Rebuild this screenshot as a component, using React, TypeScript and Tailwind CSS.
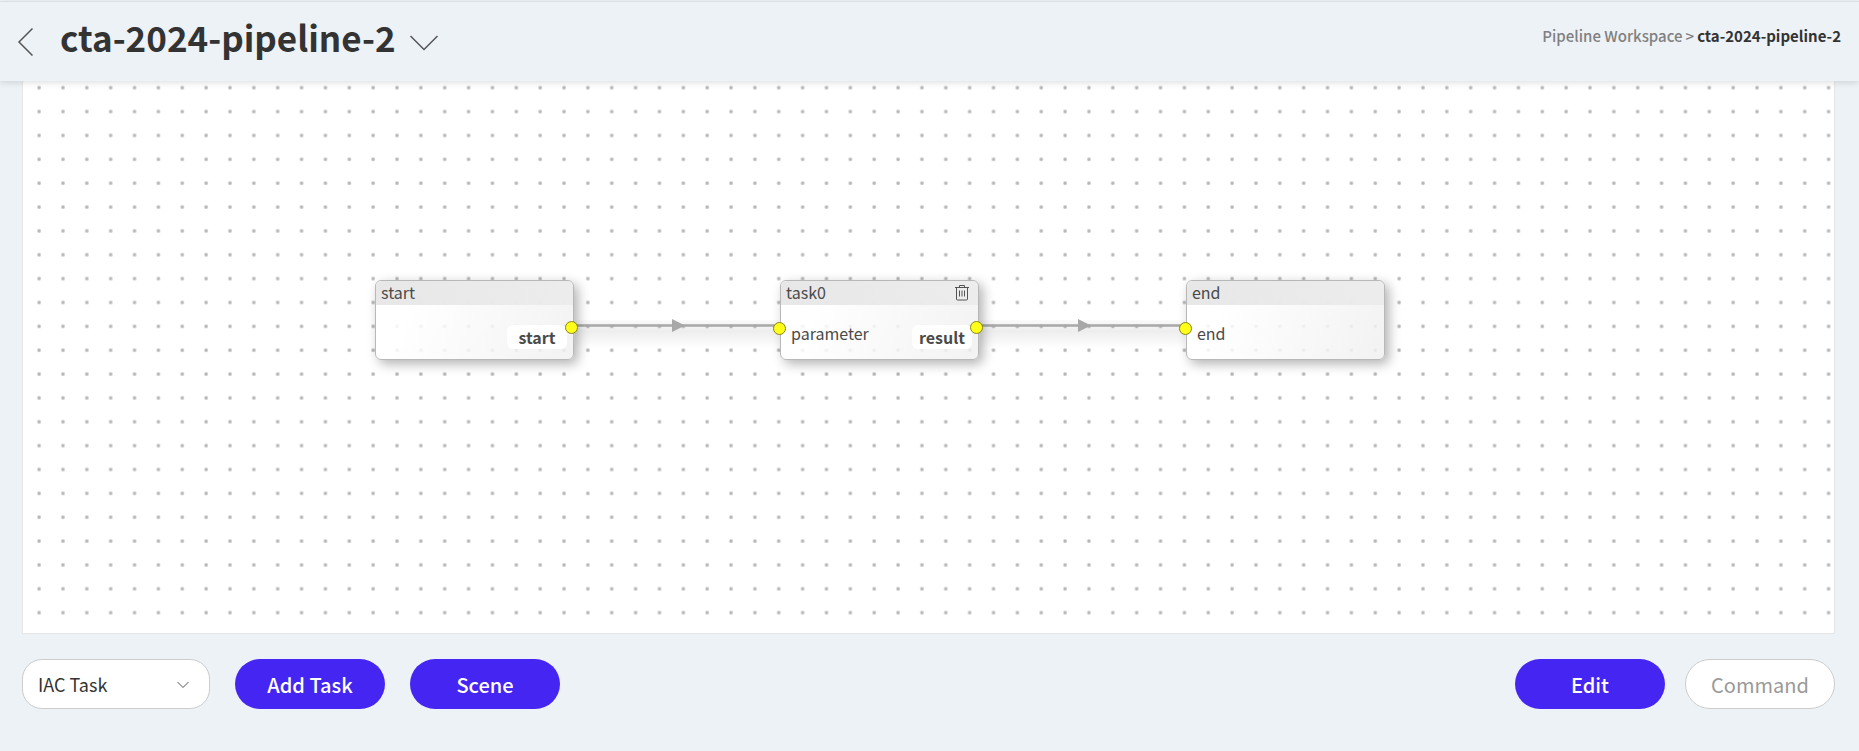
import type { ReactNode } from "react";

const DOT_STEP = 23.86;

function Port({ side, top }: { side: "left" | "right"; top: "high" | "low" }) {
  return (
    <span
      className={`absolute size-[13px] rounded-full border border-[#85850f] bg-[#ffff1a] ${
        side === "left" ? "-left-2" : "right-[-5px]"
      } ${top === "high" ? "top-10" : "top-[41px]"}`}
    />
  );
}

function Node({
  title,
  input,
  output,
  place,
  action,
}: {
  title: string;
  input?: string;
  output?: string;
  place: string;
  action?: ReactNode;
}) {
  return (
    <section
      className={`absolute top-[199px] flex h-20 w-[199px] flex-col rounded-md border border-[#b8b8b8] bg-linear-115 from-white/85 from-20% to-[#f0f0f0]/85 text-base text-[#4a4a4a] shadow-[4px_4px_12px_rgba(0,0,0,0.3)] ${place}`}
    >
      <header className="flex h-6 items-center justify-between rounded-t-md bg-linear-to-r from-[#e3e3e3]/85 to-[#ebebeb]/85 pr-2 pl-[5px]">
        <h2 className="self-start leading-[22px]">{title}</h2>
        {action}
      </header>
      <div className="flex grow justify-between">
        {input ? <span className="pt-4 pl-[10px] leading-6">{input}</span> : <span />}
        {output && (
          <span className="mt-5 mr-1.5 h-6 w-[60px] rounded-md bg-white text-center leading-6 font-bold">{output}</span>
        )}
      </div>
      {input && <Port side="left" top="low" />}
      {output && <Port side="right" top="high" />}
    </section>
  );
}

function TrashIcon() {
  return (
    <svg className="h-[18px] w-4" viewBox="0 0 16 18" fill="none" stroke="#555" strokeWidth="1">
      <path d="M1 3.5h14M5.5 3.5v-2h5v2M2.5 3.5v11.5a1 1 0 0 0 1 1h9a1 1 0 0 0 1-1V3.5M5.5 6.5v6M8 6.5v6M10.5 6.5v6" />
    </svg>
  );
}

export default function App() {
  return (
    <div className="flex min-h-screen flex-col bg-[#edf2f7] font-['Noto_Sans_CJK_KR','Noto_Sans_CJK_SC',sans-serif] text-[#333]">
      <div className="h-px" />
      <header className="relative z-10 flex h-20 items-start justify-between border-t border-[#d9dfe4] bg-[#edf2f7] pr-[18px] pl-[17px] shadow-[0_2px_6px_rgba(0,0,0,0.12)]">
        <div className="flex items-center pt-[7px]">
          <button aria-label="Back" className="mt-2.5">
            <svg className="h-7 w-4" viewBox="0 0 16 28" fill="none" stroke="#555" strokeWidth="1.5">
              <path d="M15.5 .5 2 14l13.500 13.500" />
            </svg>
          </button>
          <h1 className="ml-[27px] text-[35px] leading-[56px] font-bold">cta-2024-pipeline-2</h1>
          <button aria-label="Choose pipeline" className="mt-3 ml-3.5">
            <svg className="h-4 w-7" viewBox="0 0 28 16" fill="none" stroke="#555" strokeWidth="1.5">
              <path d="M.5 1 14 14.500 27.500 1" />
            </svg>
          </button>
        </div>
        <nav className="flex gap-[3px] pt-[22px] text-[15px] leading-6 font-medium">
          <a href="#workspace" className="text-[#808080]">Pipeline Workspace</a>
          <span className="text-[#808080]">&gt;</span>
          <span className="font-bold">cta-2024-pipeline-2</span>
        </nav>
      </header>

      <main className="relative mr-6 ml-[22px] h-[553px] overflow-hidden border border-t-0 border-[#e6e6e6] bg-white">
        <svg className="absolute inset-0 size-full">
          <defs>
            <pattern id="dots" x="4.100" y="-5.300" width={DOT_STEP} height={DOT_STEP} patternUnits="userSpaceOnUse">
              <rect x="10.400" y="10.400" width="3.200" height="3.200" rx="0.600" fill="#b6b6b6" />
            </pattern>
            <linearGradient id="wire-shade" x1="0" y1="0" x2="0" y2="1">
              <stop offset="0" stopColor="#000" stopOpacity="0.02" />
              <stop offset="0.4" stopColor="#000" stopOpacity="0.07" />
              <stop offset="1" stopColor="#000" stopOpacity="0" />
            </linearGradient>
          </defs>
          <rect width="100%" height="100%" fill="url(#dots)" />
          <path d="M552 239h205v28H552zM957 239h205v28H957z" fill="url(#wire-shade)" />
          <g stroke="#a8a8a8" strokeWidth="2.500" fill="#a8a8a8">
            <path d="M548 244.500H757M953 244.500h209" />
            <path stroke="none" d="M649 238l13 6.500-13 6.500zM1055 238l13 6.500-13 6.500z" />
          </g>
        </svg>
        <Node title="start" output="start" place="left-[352px]" />
        <Node title="task0" input="parameter" output="result" place="left-[757px]" action={<button aria-label="Delete task0"><TrashIcon /></button>} />
        <Node title="end" input="end" place="left-[1163px]" />
      </main>

      <footer className="flex justify-between pt-[25px] pr-6 pb-10 pl-[22px] text-xl font-medium">
        <div className="flex gap-[25px]">
          <div className="relative">
            <select aria-label="Task type" className="h-[50px] w-[188px] appearance-none rounded-[20px] border border-[#ccc] bg-white pl-[15px] text-lg font-normal">
              <option>IAC Task</option>
            </select>
            <svg className="pointer-events-none absolute top-[22px] right-[21px] h-2 w-3" viewBox="0 0 12 8" fill="none" stroke="#555">
              <path d="M.5 1 6 6.500 11.500 1" />
            </svg>
          </div>
          <button className="h-[50px] w-[150px] rounded-full bg-[#4525f2] pt-0.5 text-white">Add Task</button>
          <button className="h-[50px] w-[150px] rounded-full bg-[#4525f2] pt-0.5 text-white">Scene</button>
        </div>
        <div className="flex gap-5">
          <button className="h-[50px] w-[150px] rounded-full bg-[#4525f2] pt-0.5 text-white">Edit</button>
          <button className="h-[50px] w-[150px] rounded-full border border-[#ccc] bg-white pt-0.5 font-normal text-[#999]">Command</button>
        </div>
      </footer>
    </div>
  );
}
